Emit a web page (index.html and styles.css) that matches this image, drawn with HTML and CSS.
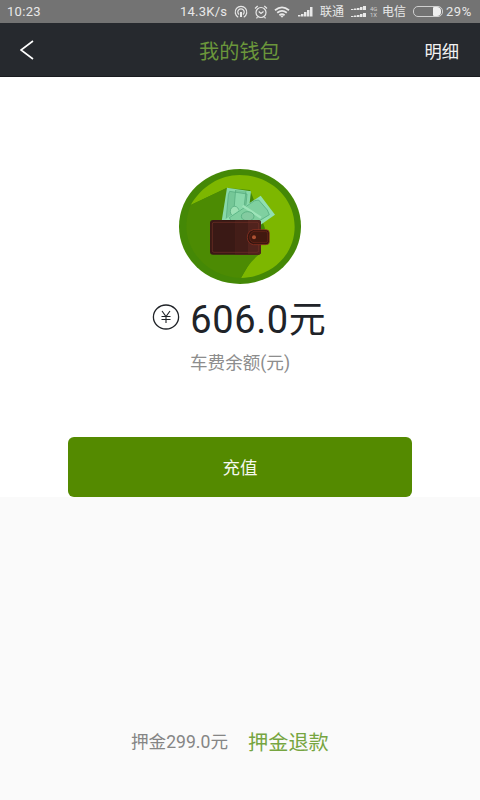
FILE: index.html
```
<!DOCTYPE html>
<html lang="zh-CN">
<head>
<meta charset="utf-8">
<title>我的钱包</title>
<link rel="stylesheet" href="styles.css">
</head>
<body>
<div class="status">
  <span class="time">10:23</span>
  <span class="speed">14.3K/s</span>
  <svg class="hotspot" width="14" height="14" viewBox="0 0 14 14" fill="none" stroke="currentColor" stroke-width="1.2"><path d="M4.2 12.200a5.800 5.800 0 1 1 5.600 0M5 9.500a3.200 3.200 0 1 1 4 0"/><path d="M7 7v5" stroke-width="2"/></svg>
  <svg class="alarm" width="14" height="14" viewBox="0 0 14 14" fill="none" stroke="currentColor" stroke-width="1.2"><circle cx="7" cy="7.500" r="5"/><path d="M1 3.500 3.700 1M13 3.500 10.300 1M4.700 6.500 7 8.400 9.500 6.500M3.500 12l-1 1.300M10.500 12l1 1.300"/></svg>
  <svg class="wifi" width="16" height="12" viewBox="0 0 16 12" fill="none" stroke="currentColor" stroke-width="1.8"><path d="M1 4.200q7-5.600 14 0M3.200 6.800q4.800-3.800 9.600 0M5.400 9.200q2.600-2 5.200 0"/><path d="m6 9.500 2 2.300 2-2.300z" fill="currentColor" stroke="none"/></svg>
  <svg class="signal" width="15" height="11" viewBox="0 0 15 11" fill="currentColor"><path d="M0 9h2.500v1.500H0zM3 8h2.500v2.500H3zM6 6h2.500v4.500H6zM9 4h2.500v6.500H9zM12 1h2.500v9.500H12z"/></svg>
  <span class="carrier">联通</span>
  <svg class="dual" width="16" height="13" viewBox="0 0 16 13" fill="currentColor"><path d="M0 4h2.500v1H0zM3 3.500h2.500V5H3zM6 3h2.500v2H6zM9 2h2.500v3H9zM12 1h3v4h-3zM0 11h2.500v1H0zM3 10.500h2.500V12H3zM6 10h2.500v2H6zM9 9h2.500v3H9zM12 8h3v4h-3z"/></svg>
  <span class="net"><span>4G</span><span>1X</span></span>
  <span class="telecom">电信</span>
  <span class="battery"><span class="level"></span></span>
  <span class="percent">29%</span>
</div>
<header class="header">
  <svg class="back" width="14" height="20" viewBox="0 0 14 20" fill="none" stroke="currentColor" stroke-width="1.6"><path d="M13 1 1 10l12 9"/></svg>
  <h1 class="title">我的钱包</h1>
  <span class="detail">明细</span>
</header>
<main class="wallet">
  <svg class="picture" width="122" height="115" viewBox="27 27 366 345" preserveAspectRatio="none">
    <ellipse cx="210" cy="199.500" rx="183" ry="172.500" fill="#448806"/>
    <path d="M62 135C96 78 150 45 208 45C301 45 374 114 374 200C374 286 303 351 213 354L255 283L285 205L240 90L170 84Z" fill="#7db700"/>
    <path d="M62 135 170 84 200 180 272 200 268 283Q232 312 213 354C125 352 51 286 49 201Q49 166 62 135Z" fill="#4c8b03"/>
    <path d="m171 83 72 11-11 96h-78z" fill="#89d8aa"/>
    <path d="m179 94 52 8-8 82h-55l7-80zM197 90l-8 92h28l11-88" fill="#75c797" stroke="#51a77a" stroke-width="2"/>
    <ellipse cx="194" cy="154" rx="13" ry="15" fill="#9de1b5" stroke="#4da578" stroke-width="2"/>
    <path d="m272 107 43 57-43 30H158l8-16z" fill="#91dfb1"/>
    <path d="m266 120-12 2-76 51 10 18h66l44-27-6-14z" fill="#7fd0a0" stroke="#4ba477" stroke-width="2"/>
    <path d="m218 137 55 36" stroke="#9ee4b9" stroke-width="7"/>
    <ellipse cx="233" cy="169" rx="19" ry="14" fill="#83cba0" stroke="#4ba477" stroke-width="2"/>
    <rect x="120" y="180" width="153" height="104" rx="9" fill="#3a1915"/>
    <path d="M196 180h68q9 0 9 9v86q0 9-9 9h-68z" fill="#51231d"/>
    <path d="M157 180h77v102h-37V182h-40z" fill="#2c1512" opacity=".35"/>
    <rect x="127" y="187" width="139" height="90" rx="5" fill="none" stroke="#713027" stroke-width="2"/>
    <path d="M250 209h38q10 0 10 10v26q0 9-10 9h-38q-18-4-18-22t18-23z" fill="#351610" stroke="#9a3523" stroke-width="2"/>
    <path d="M252 214h35q6 0 6 7v21q0 6-6 6h-35q-13-3-13-16t13-18z" fill="#42190f" stroke="#712719" stroke-width="2"/>
    <circle cx="252" cy="232" r="6" fill="#ad5132"/>
  </svg>
  <div class="amount">
    <svg class="coin" width="28" height="28" viewBox="0 0 28 28" fill="none" stroke="currentColor" stroke-width="1.300"><ellipse cx="14" cy="14" rx="12.600" ry="12"/><path d="m10 8 4 5.500L18 8M14 13.500V20M9.500 13.500h9M9.500 16.500h9" stroke-width="1.100"/></svg>
    <span class="number">606.0</span><span class="yuan">元</span>
  </div>
  <p class="caption">车费余额(元)</p>
  <button class="recharge">充值</button>
</main>
<footer class="deposit">
  <span class="held">押金299.0元</span>
  <a class="refund">押金退款</a>
</footer>
</body>
</html>
```
FILE: styles.css
```
* { box-sizing: border-box; }
body {
  margin: 0;
  width: 480px;
  height: 800px;
  display: flex;
  flex-direction: column;
  background: #fafafa;
  font-family: Roboto, "Noto Sans CJK SC", sans-serif;
  overflow: hidden;
}
svg { display: block; flex: none; }
.status {
  height: 23px;
  display: flex;
  align-items: center;
  padding: 0 0 0 7px;
  background: #737373;
  color: #e8e8e8;
  font-size: 12px;
  line-height: 22px;
  white-space: nowrap;
}
.time { width: 173px; font-size: 13px; letter-spacing: .3px; }
.speed { width: 54px; font-size: 13px; letter-spacing: .25px; }
.alarm { margin-left: 6px; }
.wifi { margin-left: 6px; }
.signal { margin-left: 8px; }
.carrier { margin-left: 7px; width: 31px; }
.net {
  display: flex;
  flex-direction: column;
  width: 15px;
  padding-left: 3px;
  font-size: 6px;
  line-height: 6px;
  color: #d0d0d0;
}
.battery {
  width: 30px;
  height: 11px;
  margin-left: 7px;
  border: 1px solid #cfcfcf;
  border-radius: 5px;
  padding: 0 1px;
  display: flex;
  justify-content: flex-end;
}
.level { width: 8px; background: #efefef; border-radius: 1px 4px 4px 1px; }
.percent { margin-left: 3px; font-size: 13px; letter-spacing: .5px; }
.header {
  height: 54px;
  display: grid;
  grid-template-columns: 100px 1fr 100px;
  align-items: center;
  padding: 2px 21px 0 20px;
  background: #26292e;
  border-bottom: 1px solid #191b1f;
  color: #fff;
}
.back { margin-top: -2px; }
.title { margin: 2px 0 0; text-align: center; color: #6b963b; font-size: 20.2px; font-weight: 400; line-height: 28px; }
.detail { margin-top: 2px; text-align: right; color: #f2f2f2; font-size: 17.300px; line-height: 28px; }
.wallet {
  height: 420px;
  display: flex;
  flex-direction: column;
  align-items: center;
  padding-top: 92px;
  background: #fff;
}
.amount {
  display: flex;
  align-items: center;
  height: 48px;
  margin-top: 11px;
  color: #202328;
  line-height: 48px;
}
.coin { margin: -4px 0 0 -2px; }
.number { margin: 2px 0 0 10px; font-size: 38px; letter-spacing: .6px; }
.yuan { margin-top: 4px; font-size: 37px; font-weight: 400; }
.caption { margin: 8px 0 0; color: #8d8d8d; font-size: 17.600px; font-weight: 400; line-height: 24px; }
.recharge {
  width: 344px;
  height: 60px;
  margin-top: 62px;
  padding: 2px 0 0;
  border: 0;
  border-radius: 6px;
  background: #548a00;
  color: #f4f8ee;
  font: 400 17.500px/58px Roboto, "Noto Sans CJK SC", sans-serif;
}
.deposit {
  display: flex;
  align-items: center;
  height: 30px;
  margin-top: 229px;
  padding-left: 131px;
}
.held { width: 117px; margin-top: -1px; color: #858585; font-size: 17.600px; font-weight: 400; }
.refund { color: #76a540; font-size: 20.2px; font-weight: 400; }
```
